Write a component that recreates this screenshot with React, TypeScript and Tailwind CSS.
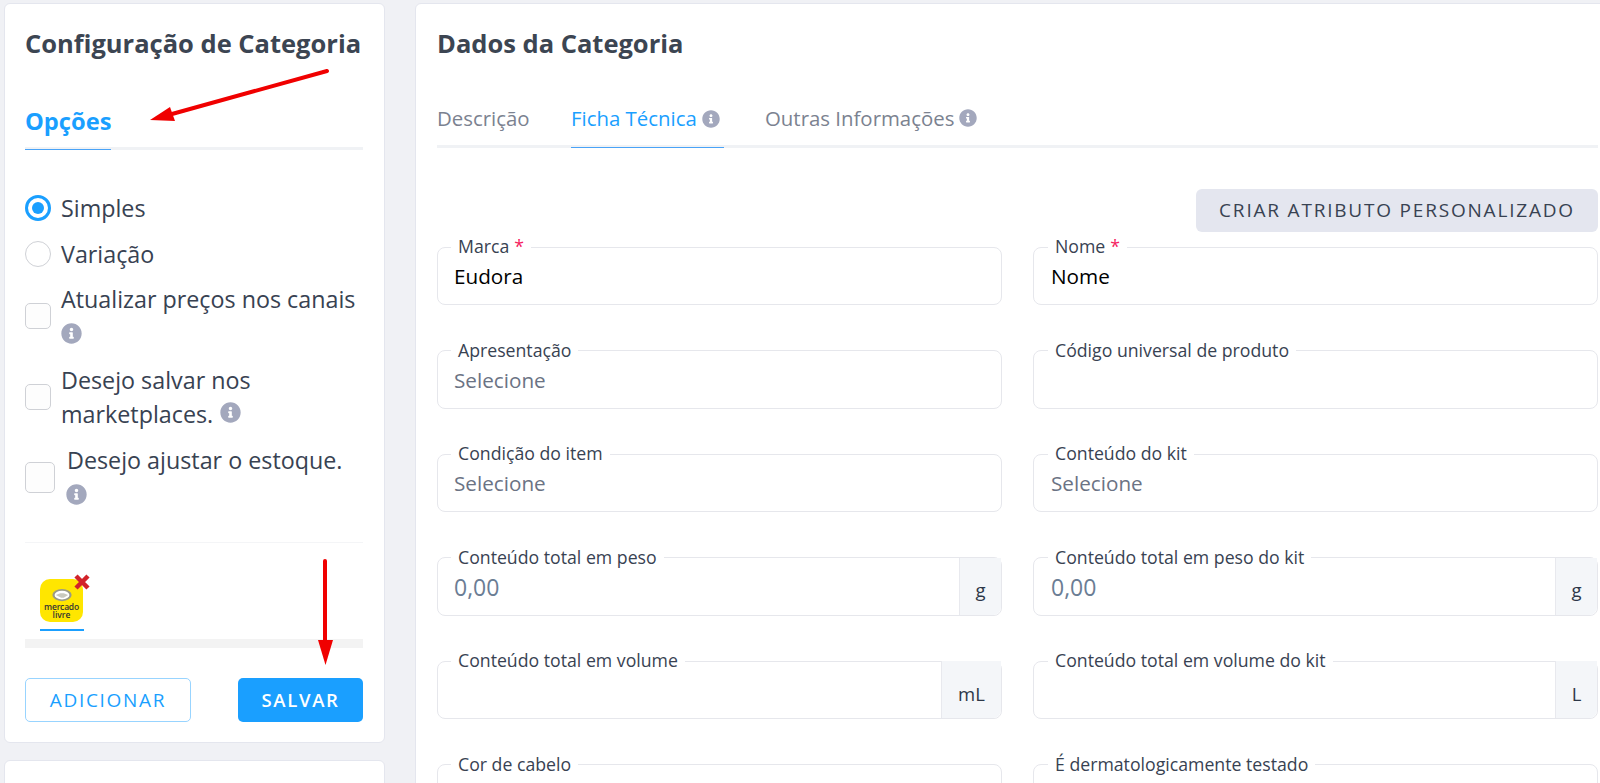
import { FaInfoCircle } from "react-icons/fa";

function Info({ className = "" }: { className?: string }) {
  return <FaInfoCircle className={`inline-block text-[#a3a8bd] ${className}`} />;
}

type FieldProps = {
  label: string;
  required?: boolean;
  value?: string;
  placeholder?: string;
  big?: boolean;
  addon?: string;
  addonW?: string;
  right?: boolean;
};

function Field({ label, required, value, placeholder, big, addon, addonW = "w-[42px]", right }: FieldProps) {
  return (
    <fieldset className="h-[68px] border border-[#e6e7ec] rounded-[8px] flex flex-col min-w-0">
      <legend
        className={`${right ? "ml-[14px]" : "ml-[13px]"} px-[7px] h-[20px] text-[17.7px] leading-[18px] text-[#384252]`}
      >
        {label}
        {required && <span className="text-[#f5225f] ml-[5px]">*</span>}
      </legend>
      <div className="flex h-[47px]">
        <div
          className={`flex-1 ${right ? "pl-[17px]" : "pl-[16px]"} pb-[9px] flex items-center text-[20.7px] leading-[24px]`}
        >
          {value && <span className="text-black">{value}</span>}
          {placeholder && (
            <span className={big ? "text-[23px] text-[#6b7d94]" : "text-[#6b7384]"}>{placeholder}</span>
          )}
        </div>
        {addon && (
          <div
            className={`${addonW} bg-[#f4f6f9] border-l border-[#e8e9ee] rounded-br-[8px] flex items-center justify-center text-[18.5px] text-[#2d3748] -mt-[10px] pt-[8px] h-[57px]`}
          >
            {addon}
          </div>
        )}
      </div>
    </fieldset>
  );
}

function Check({ w = "w-[26px] h-[26px]" }: { w?: string }) {
  return <span className={`${w} block shrink-0 border border-[#cfd1d6] rounded-[5px] bg-[#fdfdfd]`} />;
}

const fields: FieldProps[] = [
  { label: "Marca", required: true, value: "Eudora" },
  { label: "Nome", required: true, value: "Nome" },
  { label: "Apresentação", placeholder: "Selecione" },
  { label: "Código universal de produto" },
  { label: "Condição do item", placeholder: "Selecione" },
  { label: "Conteúdo do kit", placeholder: "Selecione" },
  { label: "Conteúdo total em peso", placeholder: "0,00", big: true, addon: "g" },
  { label: "Conteúdo total em peso do kit", placeholder: "0,00", big: true, addon: "g" },
  { label: "Conteúdo total em volume", addon: "mL", addonW: "w-[60px]" },
  { label: "Conteúdo total em volume do kit", addon: "L" },
  { label: "Cor de cabelo" },
  { label: "É dermatologicamente testado" },
];

export default function App() {
  return (
    <div
      className="relative h-[783px] w-[1600px] overflow-hidden bg-[#f0f1f5] pl-[4px] pt-[3px] flex gap-[30px] items-start"
      style={{ fontFamily: '"Open Sans", sans-serif' }}
    >
      <div className="w-[381px] shrink-0 flex flex-col gap-[17px]">
        <div className="h-[740px] bg-white border border-[#e4e6ee] rounded-[6px] pl-[20px] pr-[21px] pt-[25px] flex flex-col">
          <h1 className="text-[25.5px] leading-[28px] font-bold text-[#3c4552] whitespace-nowrap">
            Configuração de Categoria
          </h1>
          <div className="mt-[40px] h-[53px] border-b-[3px] border-[#f0f2f5] flex">
            <div className="h-[53px] w-[86px] border-b border-[#4aa3f7] text-[23.7px] leading-[30px] font-bold text-[#1a9fff] pt-[9px]">
              Opções
            </div>
          </div>

          <div className="mt-[45px] flex items-center gap-[10px] h-[26px]">
            <span className="w-[26px] h-[26px] rounded-full border-[3px] border-[#1a9fff] flex items-center justify-center">
              <span className="w-[12px] h-[12px] rounded-full bg-[#1a9fff]" />
            </span>
            <span className="text-[23.3px] leading-[26px] text-[#384252]">Simples</span>
          </div>
          <div className="mt-[20px] flex items-center gap-[10px] h-[26px]">
            <span className="w-[26px] h-[26px] rounded-full border border-[#cfd1d6]" />
            <span className="text-[23.3px] leading-[26px] text-[#384252]">Variação</span>
          </div>

          <div className="mt-[15px] flex items-center gap-[10px] h-[68px]">
            <Check />
            <div className="text-[23.3px] leading-[34px] text-[#384252] whitespace-nowrap">
              <div>Atualizar preços nos canais</div>
              <div className="flex items-center h-[34px]">
                <Info className="w-[21px] h-[21px]" />
              </div>
            </div>
          </div>

          <div className="mt-[13px] flex items-center gap-[10px] h-[68px]">
            <Check />
            <div className="text-[23.3px] leading-[34px] text-[#384252] whitespace-nowrap">
              <div>Desejo salvar nos</div>
              <div className="flex items-center gap-[7px] h-[34px]">
                marketplaces.
                <Info className="w-[21px] h-[21px] -mt-[4px]" />
              </div>
            </div>
          </div>

          <div className="mt-[12px] flex items-center gap-[12px] h-[68px]">
            <Check w="w-[30px] h-[31px]" />
            <div className="text-[23.3px] leading-[34px] text-[#384252] whitespace-nowrap">
              <div>Desejo ajustar o estoque.</div>
              <div className="flex items-center h-[34px] -ml-[1px]">
                <Info className="w-[21px] h-[21px]" />
              </div>
            </div>
          </div>

          <div className="mt-[31px] border-t border-[#f4f5f7]" />

          <div className="mt-[36px] ml-[15px] relative w-[44px] h-[52px] border-b-[2px] border-[#1a9fff]">
            <div className="w-[43px] h-[43px] rounded-[10px] bg-[#ffe600] flex flex-col items-center pt-[9px]">
              <svg viewBox="0 0 24 16" className="w-[22px] h-[14px] shrink-0">
                <ellipse cx="12" cy="8" rx="11" ry="7" fill="#9a9a86" />
                <ellipse cx="12" cy="8" rx="8.5" ry="5" fill="#ffffff" />
                <path d="M5 8 L10 6 L14 6 L19 8 L14 11 L11 11 Z" fill="#c9c9bd" />
              </svg>
              <span className="text-[8.5px] leading-[8px] font-semibold text-[#333333] mt-[1px] tracking-[-0.2px]">mercado</span>
              <span className="text-[8.5px] leading-[8px] font-semibold text-[#333333]">livre</span>
            </div>
            <svg viewBox="0 0 18 18" className="absolute left-[33px] -top-[6px] w-[18px] h-[18px]">
              <path d="M3 3 L15 15 M15 3 L3 15" stroke="#d2232a" strokeWidth="4.5" />
            </svg>
          </div>

          <div className="mt-[8px] h-[9px] bg-[#f3f3f3]" />

          <div className="mt-[30px] flex justify-between">
            <button className="w-[166px] h-[44px] rounded-[5px] border border-[#98d4ff] text-[#1a9fff] text-[19px] tracking-[1.7px] bg-white">
              ADICIONAR
            </button>
            <button className="w-[125px] h-[44px] rounded-[5px] bg-[#1a9fff] text-white text-[18.5px] font-semibold tracking-[1.7px]">
              SALVAR
            </button>
          </div>
        </div>
        <div className="h-[100px] bg-white border border-[#e4e6ee] rounded-[6px]" />
      </div>

      <div className="w-[1208px] shrink-0 h-[900px] bg-white border border-[#e4e6ee] rounded-[6px] pl-[21px] pt-[25px]">
        <h2 className="text-[25.5px] leading-[28px] font-bold text-[#3c4552]">Dados da Categoria</h2>
        <div className="w-[1161px] mt-[38px] h-[53px] border-b-[3px] border-[#f0f2f5] flex text-[20.4px] leading-[28px]">
          <div className="w-[134px] pt-[9px] text-[#7b8290]">Descrição</div>
          <div className="w-[153px] h-[53px] border-b border-[#4aa3f7] pt-[9px] text-[#1a9fff] flex items-start whitespace-nowrap">
            Ficha Técnica
            <Info className="w-[18px] h-[18px] ml-[5px] mt-[6px]" />
          </div>
          <div className="ml-[41px] pt-[9px] text-[#7b8290] flex items-start whitespace-nowrap">
            Outras Informações
            <Info className="w-[18px] h-[18px] ml-[5px] mt-[5px]" />
          </div>
        </div>

        <div className="w-[1161px] mt-[41px] flex justify-end">
          <button className="w-[402px] h-[43px] rounded-[6px] bg-[#e4e6ef] text-[#384252] text-[19px] tracking-[1.8px]">
            CRIAR ATRIBUTO PERSONALIZADO
          </button>
        </div>

        <div className="w-[1161px] mt-[5px] grid grid-cols-2 gap-x-[31px] gap-y-[35.5px]">
          {fields.map((f, i) => (
            <Field key={f.label} {...f} right={i % 2 === 1} />
          ))}
        </div>
      </div>

      <svg className="absolute left-0 top-0 w-[1600px] h-[783px] pointer-events-none" viewBox="0 0 1600 783">
        <path d="M327 71 L172 114" stroke="#f00000" strokeWidth="4" strokeLinecap="round" fill="none" />
        <path d="M150 120 L170 107 L175 121 Z" fill="#f00000" />
        <path d="M325 561 L325 642" stroke="#f00000" strokeWidth="4" strokeLinecap="round" fill="none" />
        <path d="M318 640 L333 640 L325.5 665 Z" fill="#f00000" />
      </svg>
    </div>
  );
}
